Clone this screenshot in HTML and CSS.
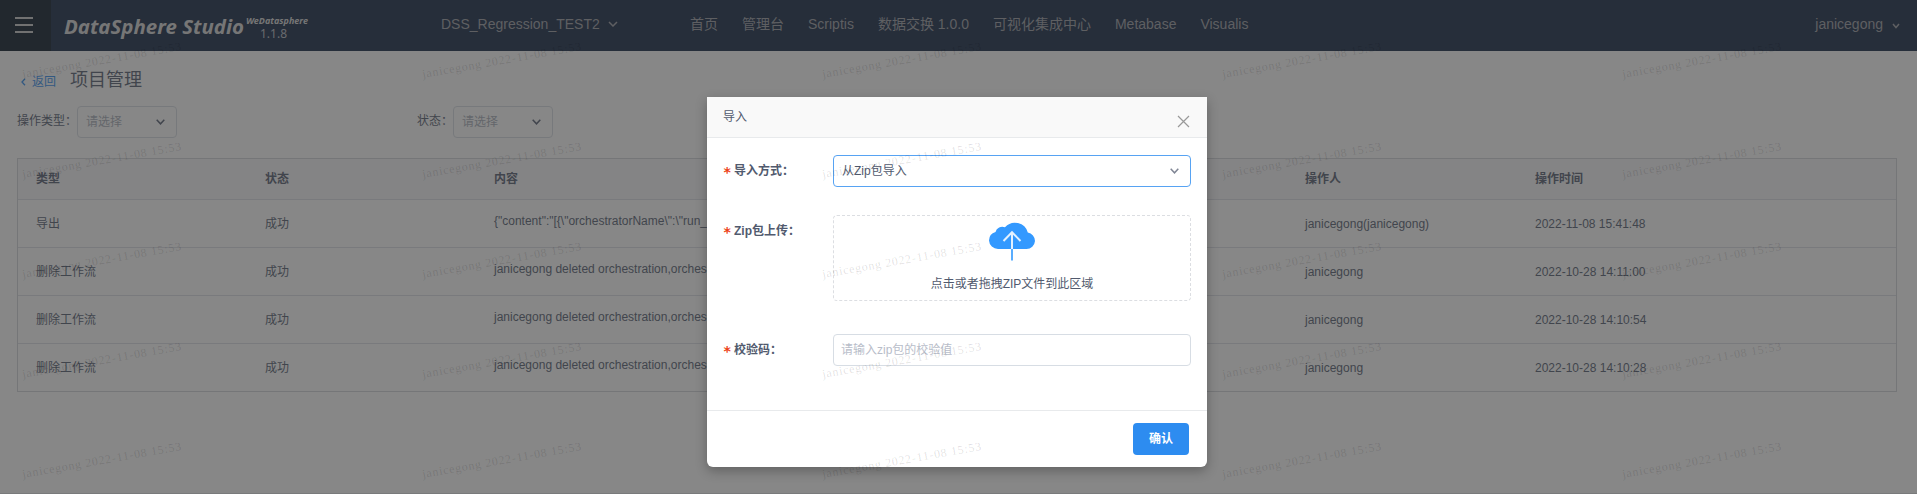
FILE: index.html
```html
<!DOCTYPE html>
<html lang="zh-CN">
<head>
<meta charset="utf-8">
<title>DataSphere Studio</title>
<link rel="stylesheet" href="styles.css">
</head>
<body>
<div class="app">
  <header class="topbar">
    <button class="menu" aria-label="menu"><i></i><i></i><i></i></button>
    <svg class="logo" viewBox="0 0 260 51" width="260" height="51">
      <text class="logo-name" x="13" y="34" textLength="180" lengthAdjust="spacingAndGlyphs">DataSphere Studio</text>
      <text class="logo-sub" x="195" y="24" textLength="62" lengthAdjust="spacingAndGlyphs">WeDatasphere</text>
      <text class="logo-version" x="209" y="38">1.1.8</text>
    </svg>
    <div class="workspace">DSS_Regression_TEST2
      <svg class="chev" width="10" height="6" viewBox="0 0 10 6"><path d="M1 1l4 4 4-4"/></svg>
    </div>
    <nav class="nav"><span>首页</span><span>管理台</span><span>Scriptis</span><span>数据交换 1.0.0</span><span>可视化集成中心</span><span>Metabase</span><span>Visualis</span></nav>
    <div class="user">janicegong
      <svg class="chev small" width="8" height="6" viewBox="0 0 8 6"><path d="M1 1l3 3.5 3-3.5"/></svg>
    </div>
  </header>

  <div class="title-row">
    <a class="back"><svg width="5" height="8" viewBox="0 0 5 8"><path d="M4 .8L1 4l3 3.2"/></svg>返回</a>
    <h1>项目管理</h1>
  </div>

  <div class="filters">
    <div class="filter"><label>操作类型：</label><div class="select">请选择<svg class="chev" width="9" height="6" viewBox="0 0 9 6"><path d="M.7 .8l3.8 4 3.8-4"/></svg></div></div>
    <div class="filter"><label>状态：</label><div class="select">请选择<svg class="chev" width="9" height="6" viewBox="0 0 9 6"><path d="M.7 .8l3.8 4 3.8-4"/></svg></div></div>
  </div>

  <div class="table">
    <div class="row head"><span>类型</span><span>状态</span><span>内容</span><span>操作人</span><span>操作时间</span></div>
    <div class="row"><span>导出</span><span>成功</span><span class="content">{"content":"[{\"orchestratorName\":\"run_</span><span>janicegong(janicegong)</span><span>2022-11-08 15:41:48</span></div>
    <div class="row"><span>删除工作流</span><span>成功</span><span class="content">janicegong deleted orchestration,orches</span><span>janicegong</span><span>2022-10-28 14:11:00</span></div>
    <div class="row"><span>删除工作流</span><span>成功</span><span class="content">janicegong deleted orchestration,orches</span><span>janicegong</span><span>2022-10-28 14:10:54</span></div>
    <div class="row"><span>删除工作流</span><span>成功</span><span class="content">janicegong deleted orchestration,orches</span><span>janicegong</span><span>2022-10-28 14:10:28</span></div>
  </div>
</div>

<div class="mask">
  <section class="modal">
    <header class="modal-head">导入
      <svg class="close" width="13" height="13" viewBox="0 0 13 13"><path d="M1 1l11 11M12 1L1 12"/></svg>
    </header>
    <div class="modal-body">
      <div class="field"><label><b>*</b>导入方式：</label>
        <div class="select active">从Zip包导入<svg class="chev" width="9" height="6" viewBox="0 0 9 6"><path d="M.7 .8l3.8 4 3.8-4"/></svg></div></div>
      <div class="field"><label><b>*</b>Zip包上传：</label>
        <div class="upload">
          <svg width="46" height="40" viewBox="0 0 46 40">
            <path fill="#3399ff" d="M9 28A9 9 0 0 1 0 19.5A9 9 0 0 1 6.500 11A7 7 0 0 1 16 6.200A13.300 13.300 0 0 1 38.800 11.500A8.700 8.700 0 0 1 46 20A8.700 8.700 0 0 1 37.500 28Z"/>
            <path class="stem" d="M23 28V39.500"/>
            <path class="arrow" d="M23 28V12M14.500 20L23 11.300 31.500 20"/>
          </svg>
          <p>点击或者拖拽ZIP文件到此区域</p>
        </div></div>
      <div class="field"><label><b>*</b>校验码：</label>
        <div class="select input">请输入zip包的校验值</div></div>
    </div>
    <footer class="modal-foot"><button class="confirm">确认</button></footer>
  </section>
</div>

<svg class="watermark" width="1917" height="494" aria-hidden="true"></svg>
<script src="watermark.js"></script>
</body>
</html>
```

FILE: styles.css
```css
* { box-sizing: border-box; }
body {
  margin: 0;
  height: 494px;
  overflow: hidden;
  position: relative;
  background: #fff;
  color: #515a6e;
  font: 12px/18px "Liberation Sans", "Noto Sans CJK SC", sans-serif;
}
button { border: 0; padding: 0; font: inherit; }
svg { display: block; flex: none; }
.app { height: 494px; border-bottom: 1px solid #dcdee2; }
.chev { fill: none; stroke: currentColor; stroke-width: 1.5; }

.topbar { display: flex; align-items: center; height: 51px; background: #0e213f; color: #999ca3; font-size: 14px; }
.menu { width: 51px; height: 51px; background: #041321; display: flex; flex-direction: column; align-items: center; justify-content: center; gap: 5px; padding-right: 3px; padding-bottom: 1px; }
.menu i { width: 18px; height: 2px; background: #c8c8c8; }
.logo { fill: #d4d4d4; }
.logo-name { font: italic bold 20px "Noto Sans", sans-serif; }
.logo-sub { font: italic bold 9px "Noto Sans", sans-serif; }
.logo-version { font: 12px "Noto Sans", sans-serif; fill: #b4b8c0; }
.workspace { display: flex; align-items: center; gap: 8px; width: 249px; margin-left: 130px; padding-bottom: 3px; }
.nav { display: flex; gap: 24px; padding-bottom: 3px; white-space: nowrap; }
.user { display: flex; align-items: center; gap: 9px; margin-left: auto; padding: 0 17px 3px 0; }
.small { margin-top: 3px; }

.title-row { display: flex; align-items: center; height: 55px; padding-left: 21px; }
.back { display: flex; align-items: center; gap: 6px; width: 49px; padding-top: 6px; color: #2d8cf0; }
.back svg { fill: none; stroke: currentColor; stroke-width: 1.3; }
h1 { margin: 2px 0 0; font-size: 18px; line-height: 26px; font-weight: 400; }

.filters { display: flex; height: 32px; padding-left: 17px; }
.filter { width: 400px; display: flex; }
.filter label { line-height: 30px; }
.select { display: flex; align-items: center; justify-content: space-between; height: 32px; border: 1px solid #d7dde4; border-radius: 4px; padding: 0 11px 0 8px; }
.filter .select { width: 100px; color: #a6acb8; }
.filter .select svg { color: #515a6e; }

.table { margin: 20px 20px 0 17px; border: 1px solid #d2d5da; }
.row { display: grid; grid-template-columns: 229px 229px 811px 230px 1fr; align-items: center; height: 48px; border-bottom: 1px solid #dcdfe5; }
.row:last-child { border-bottom: 0; height: 47px; }
.row.head { height: 41px; font-weight: 700; background: #f8f8f9; }
.row span { padding-left: 18px; white-space: nowrap; }
.row .content { padding-bottom: 5px; }

.mask { position: absolute; inset: 0; display: flex; justify-content: center; align-items: flex-start; padding: 97px 3px 0 0; background: rgba(55, 55, 55, .6); }
.modal { display: flex; flex-direction: column; width: 500px; height: 370px; border-radius: 0 0 6px 6px; background: #fff; box-shadow: 0 4px 12px rgba(0, 0, 0, .28); }
.modal-head { display: flex; justify-content: space-between; height: 41px; padding: 11px 17px 0 16px; background: #f9f9f9; border-bottom: 1px solid #e8eaec; }
.close { margin-top: 7px; fill: none; stroke: #999; stroke-width: 1.2; }
.modal-body { flex: 1; padding: 17px 16px 0; }
.field { display: grid; grid-template-columns: 110px 1fr; margin-bottom: 28px; }
.field label { font-weight: 700; line-height: 32px; }
.field label b { display: inline-block; width: 11px; color: #ed4014; font: bold 14px/18px "DejaVu Sans Mono", monospace; vertical-align: -2px; }
.active { border-color: #57a3f3; }
.active .chev { color: #808695; }
.input { color: #b8bdc9; padding-left: 7px; }
.field:last-child { margin-top: 33px; }
.upload { height: 86px; padding-top: 5px; display: flex; flex-direction: column; align-items: center; border: 1px dashed #dcdee2; border-radius: 4px; }
.upload p { margin: 14px 0 0; }
.stem { stroke: #59adff; stroke-width: 2; }
.arrow { fill: none; stroke: #e3f1ff; stroke-width: 2; }
.modal-foot { height: 57px; padding: 12px 18px; border-top: 1px solid #e8eaec; display: flex; justify-content: flex-end; }
.confirm { width: 56px; height: 32px; border-radius: 4px; background: #2d8cf0; color: #fff; font-weight: 700; }

.watermark { position: absolute; inset: 0; pointer-events: none; overflow: hidden; }
.stamp { font: 12px "Liberation Serif", serif; letter-spacing: .75px; fill: rgba(0, 0, 0, .12); }
.trace { font: 16px "Liberation Mono", monospace; fill: rgba(0, 0, 0, .015); }
```

FILE: watermark.js
```js
const layer = document.querySelector('.watermark');

function stamp(text, cls, x, y, angle) {
  const node = document.createElementNS('http://www.w3.org/2000/svg', 'text');
  node.textContent = text;
  node.setAttribute('class', cls);
  node.setAttribute('transform', `translate(${x} ${y}) rotate(${angle})`);
  layer.appendChild(node);
}

for (let row = 0; row < 5; row++) {
  for (let col = 0; col < 5; col++) {
    stamp('janicegong 2022-11-08 15:53', 'stamp', 23 + col * 400, 78 + row * 100, -10);
  }
}

for (let j = -5; j < 7; j++) {
  for (let i = -8; i < 10; i++) {
    const x = 750 + i * 100 + j * 217;
    const y = 361 + i * 100 - j * 225;
    if (x > -160 && x < 1917 && y > 0 && y < 650) {
      stamp('ARIONLIUKF1. 2022-11-08', 'trace', x, y, -45);
    }
  }
}
```
